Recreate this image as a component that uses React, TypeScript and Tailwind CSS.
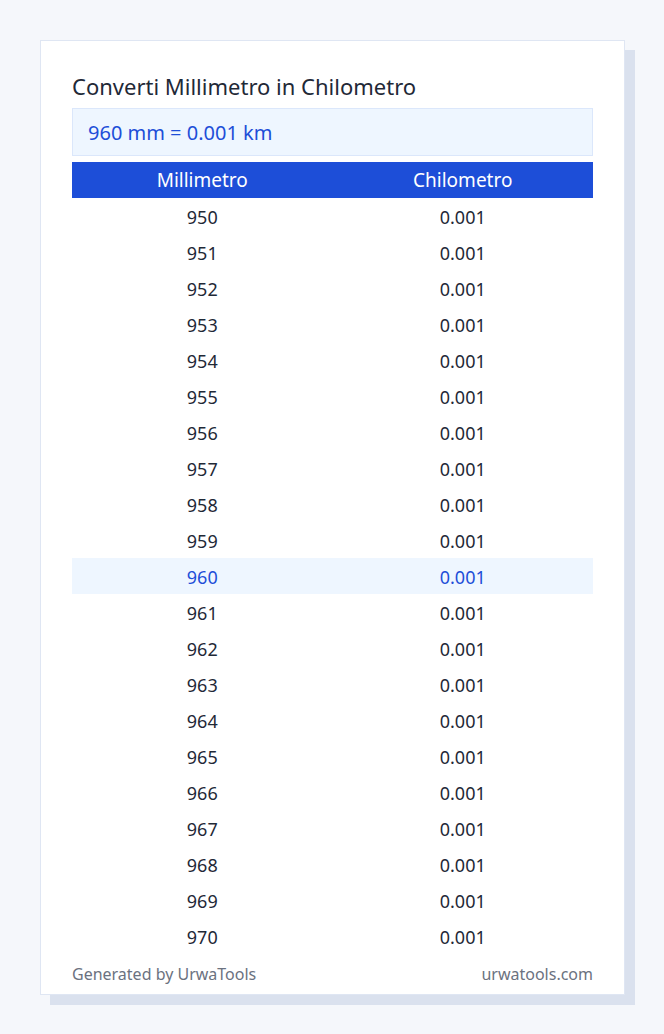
const rows = Array.from({ length: 21 }, (_, i) => 950 + i);

const App = () => {
  return (
    <div className="min-h-screen bg-[#f5f7fb] p-10 font-['Noto_Sans',sans-serif]">
      <div className="w-[585px] border border-[#dfe6f3] bg-white px-[31px] pt-[31px] pb-2 shadow-[10px_10px_0_#dae1ee]">
        <h1 className="text-[22px] leading-7 text-[#1f2937]">
          Converti Millimetro in Chilometro
        </h1>
        <div className="mt-2 h-12 flex items-center border border-[#dbe7fb] bg-[#eef6ff] px-[15px] pt-px text-[20px] text-[#1d4ed8]">
          960 mm = 0.001 km
        </div>
        <table className="mt-1.5 w-full table-fixed border-collapse text-[18px]">
          <thead>
            <tr className="h-9 bg-[#1d4ed8] text-[19px] text-white">
              <th className="font-normal">Millimetro</th>
              <th className="font-normal">Chilometro</th>
            </tr>
          </thead>
          <tbody>
            {rows.map((n) => {
              const active = n === 960;
              return (
                <tr
                  key={n}
                  className={`h-9 text-center ${
                    active ? 'bg-[#eef6ff] text-[#1d4ed8]' : 'text-[#1f2937]'
                  }`}
                >
                  <td className="pt-[2px]">{n}</td>
                  <td className="pt-[2px]">0.001</td>
                </tr>
              );
            })}
          </tbody>
        </table>
        <div className="mt-2 flex h-6 items-center justify-between text-[16px] text-[#6b7280]">
          <span>Generated by UrwaTools</span>
          <span>urwatools.com</span>
        </div>
      </div>
    </div>
  );
};

export default App;
